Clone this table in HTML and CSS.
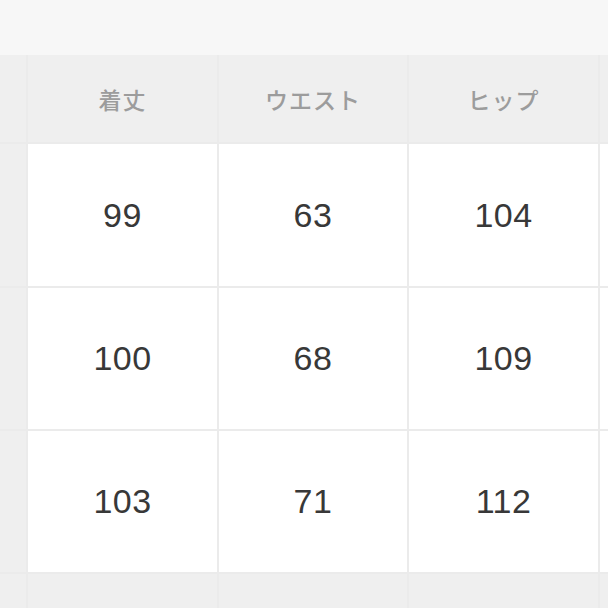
FILE: index.html
```html
<!DOCTYPE html>
<html lang="ja">
<head>
<meta charset="utf-8">
<link rel="stylesheet" href="styles.css">
</head>
<body>
<div class="topbar"></div>
<div class="table">
  <div class="cell side"></div>
  <div class="cell head">着丈</div>
  <div class="cell head">ウエスト</div>
  <div class="cell head">ヒップ</div>
  <div class="cell side"></div>

  <div class="cell side"></div>
  <div class="cell val">99</div>
  <div class="cell val">63</div>
  <div class="cell val">104</div>
  <div class="cell val edge"></div>

  <div class="cell side"></div>
  <div class="cell val">100</div>
  <div class="cell val">68</div>
  <div class="cell val">109</div>
  <div class="cell val edge"></div>

  <div class="cell side"></div>
  <div class="cell val">103</div>
  <div class="cell val">71</div>
  <div class="cell val">112</div>
  <div class="cell val edge"></div>

  <div class="cell side"></div>
  <div class="cell side"></div>
  <div class="cell side"></div>
  <div class="cell side"></div>
  <div class="cell side"></div>
</div>
</body>
</html>
```

FILE: styles.css
```css
html, body {
  margin: 0;
  padding: 0;
  width: 608px;
  height: 608px;
  overflow: hidden;
  background: #f7f7f7;
  font-family: "Noto Sans CJK JP", "Noto Sans", sans-serif;
}
.topbar {
  height: 55px;
  background: #f7f7f7;
}
.table {
  display: grid;
  grid-template-columns: 26px 189px 188px 189px 1fr;
  grid-template-rows: 87px 142px 141px 141px 40px;
  gap: 2px;
  background: #ebebeb;
  height: 553px;
}
.cell {
  display: flex;
  align-items: center;
  justify-content: center;
}
.side {
  background: #efefef;
}
.head {
  background: #efefef;
  color: #9c9c9c;
  font-size: 23px;
  font-weight: 500;
  letter-spacing: 1px;
}
.val {
  background: #ffffff;
  color: #383838;
  font-family: "Liberation Sans", "Noto Sans CJK JP", sans-serif;
  font-size: 34px;
  letter-spacing: 0.5px;
}
```
